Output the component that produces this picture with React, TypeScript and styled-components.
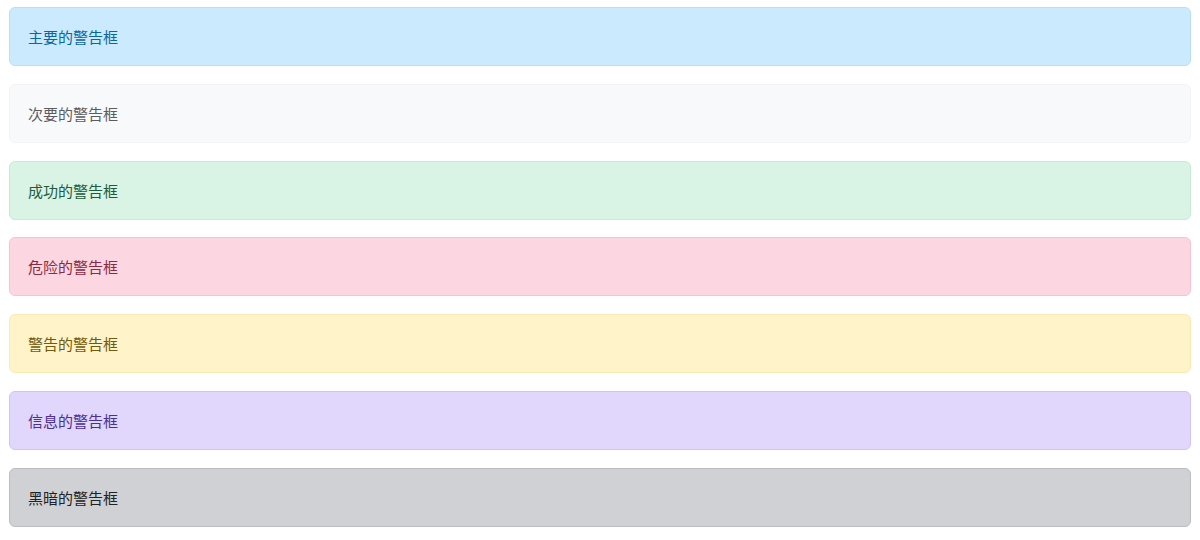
import { createGlobalStyle } from 'styled-components'
import styled from 'styled-components'

const GlobalStyle = createGlobalStyle`
  body {
    margin: 0;
    background: #ffffff;
    font-family: "Noto Sans CJK SC", "Noto Sans", sans-serif;
  }
`

const Page = styled.div`
  display: flex;
  flex-direction: column;
  gap: 17.8px;
  padding: 7px 9px 0 9px;
`

type Tone = {bg: string, border: string, color: string}

const tones: {[k: string]: Tone} = {
  primary: {bg: '#cbeafd', border: '#b6dff9', color: '#0b66a0'},
  secondary: {bg: '#f8f9fb', border: '#f3f4f7', color: '#5c5c60'},
  success: {bg: '#d9f3e5', border: '#c6ebd7', color: '#1f5b3c'},
  danger: {bg: '#fcd7e1', border: '#f8c2d0', color: '#8c2a43'},
  warning: {bg: '#fef3c9', border: '#fde9b2', color: '#74590a'},
  info: {bg: '#e1d6fb', border: '#d1c3f7', color: '#4b2f96'},
  dark: {bg: '#d0d1d4', border: '#bbbdc1', color: '#202226'},
}

const Alert = styled.div<{$tone: Tone}>`
  box-sizing: border-box;
  height: 59px;
  padding: 0 18px;
  display: flex;
  align-items: center;
  border: 1px solid ${p => p.$tone.border};
  border-radius: 6px;
  background: ${p => p.$tone.bg};
  color: ${p => p.$tone.color};
  font-size: 15px;
  line-height: 23px;
`

const items = [
  {key: 'primary', text: '主要的警告框'},
  {key: 'secondary', text: '次要的警告框'},
  {key: 'success', text: '成功的警告框'},
  {key: 'danger', text: '危险的警告框'},
  {key: 'warning', text: '警告的警告框'},
  {key: 'info', text: '信息的警告框'},
  {key: 'dark', text: '黑暗的警告框'},
]

export default function App() {
  return (
    <>
      <GlobalStyle />
      <Page>
        {items.map(it => (
          <Alert key={it.key} $tone={tones[it.key]}>{it.text}</Alert>
        ))}
      </Page>
    </>
  )
}
